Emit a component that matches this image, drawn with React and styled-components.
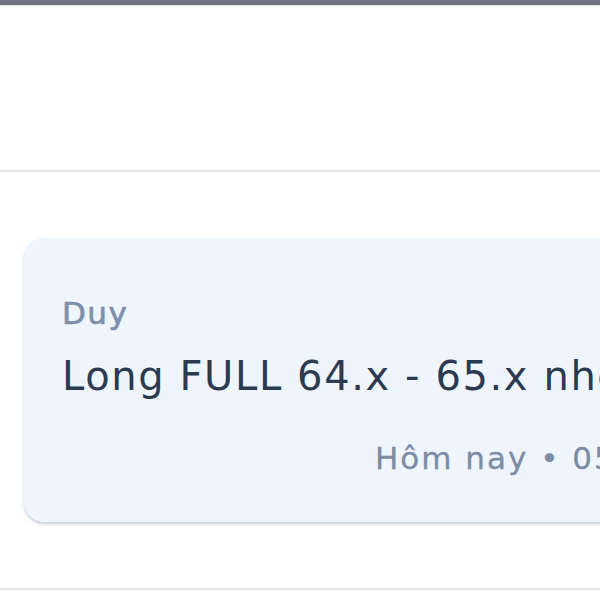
import React from 'react';
import styled, { createGlobalStyle } from 'styled-components';

const Global = createGlobalStyle`
	html, body {
		margin: 0;
		padding: 0;
		background: #ffffff;
		overflow: hidden;
	}
	body {
		font-family: "DejaVu Sans", "Noto Sans", sans-serif;
	}
`;

const Page = styled.div`
	width: 1000px;
	height: 600px;
	display: flex;
	flex-direction: column;
	background: #ffffff;
`;

const TopBar = styled.div`
	height: 5px;
	background: #70737f;
	box-shadow: 0 1px 2px rgba(0, 0, 0, 0.12);
`;

const Header = styled.div`
	height: 165px;
	border-bottom: 2px solid #e3e4e7;
`;

const List = styled.div`
	flex: 1;
	padding: 66px 0 0 24px;
	border-bottom: 2px solid #e3e4e7;
	max-height: 350px;
`;

const Card = styled.div`
	width: 900px;
	height: 284px;
	box-sizing: border-box;
	padding: 55px 38px 0;
	background: #eff5fd;
	border-radius: 20px;
	box-shadow: 0 2px 3px rgba(40, 50, 70, 0.25);
	display: flex;
	flex-direction: column;
`;

const Sender = styled.div`
	font-size: 31px;
	line-height: 40px;
	letter-spacing: 1.5px;
	-webkit-text-stroke: 0.7px #7f8fa9;
	color: #7f8fa9;
`;

const Body = styled.div`
	font-size: 40px;
	line-height: 50px;
	letter-spacing: 1.6px;
	color: #2c3a50;
	white-space: nowrap;
	margin-top: 18px;
`;

const Meta = styled.div`
	font-size: 31px;
	line-height: 40px;
	letter-spacing: 2px;
	-webkit-text-stroke: 0.3px #7c8ba4;
	color: #7c8ba4;
	padding-left: 313px;
	margin-top: 37px;
	white-space: nowrap;
`;

export default function App() {
	return (
		<>
			<Global />
			<Page>
				<TopBar />
				<Header />
				<List>
					<Card>
						<Sender>Duy</Sender>
						<Body>Long FULL 64.x - 65.x nhé</Body>
						<Meta>Hôm nay • 05:12</Meta>
					</Card>
				</List>
			</Page>
		</>
	);
}
